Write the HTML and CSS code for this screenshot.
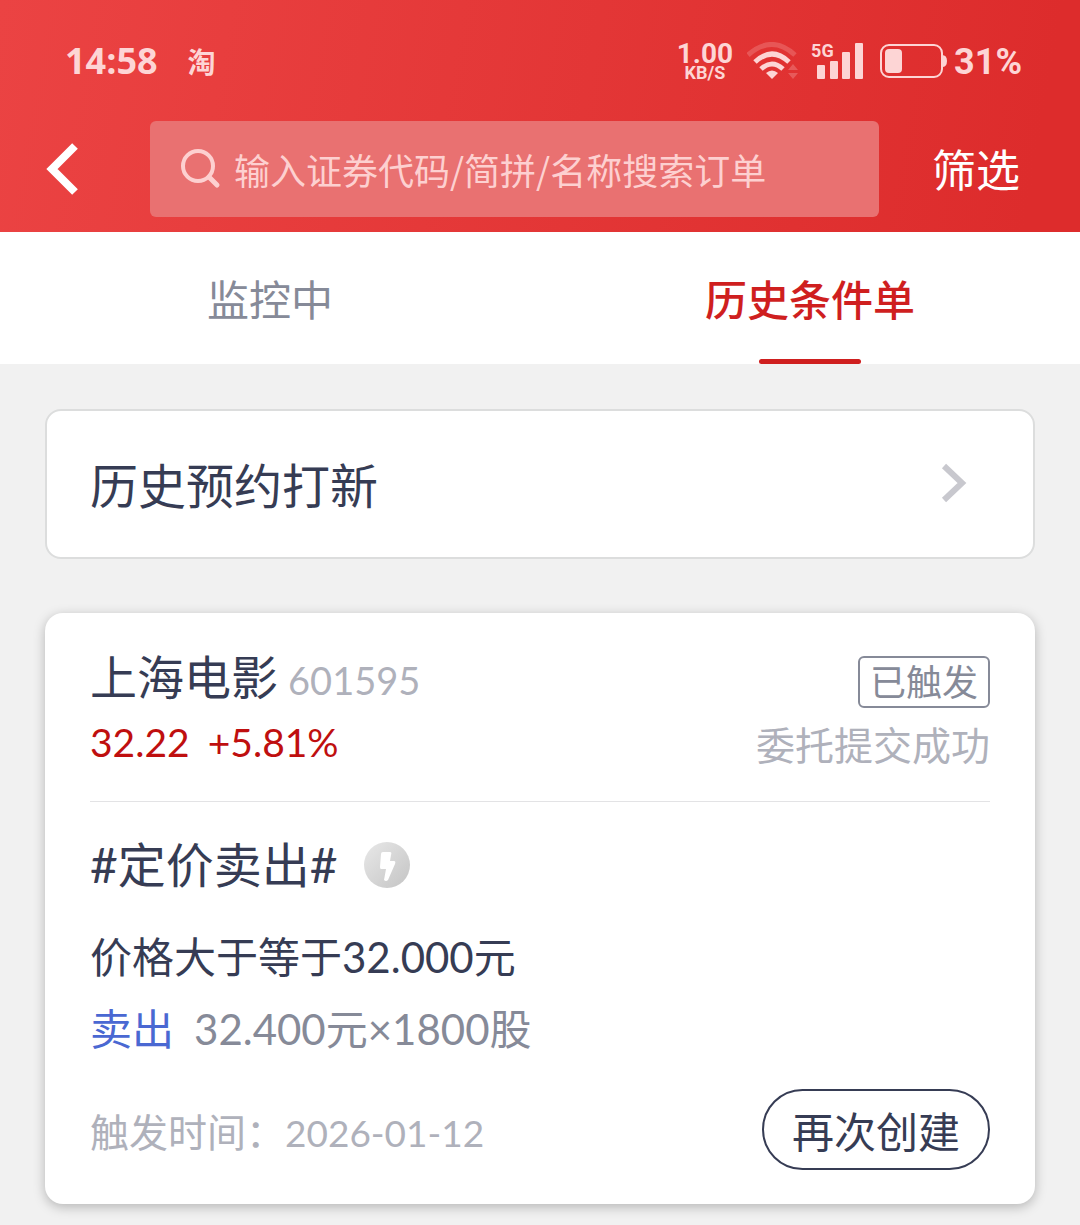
FILE: index.html
```html
<!DOCTYPE html>
<html lang="zh-CN">
<head>
    <meta charset="UTF-8">
    <meta name="viewport" content="width=device-width, initial-scale=1.0">
    <title>历史条件单</title>
    <link rel="stylesheet" href="styles.css">
</head>
<body>
    <header class="header">
        <div class="status-bar">
            <span class="time">14:58</span>
            <span class="app-mark">淘</span>
            <div class="speed">
                <span class="speed-value">1.00</span>
                <span class="speed-unit">KB/S</span>
            </div>
            <svg class="wifi" width="52" height="38" viewBox="0 0 52 38" fill="none" stroke="#fdd5d5" stroke-width="5">
                <path d="M1 13 Q25 -8 48 13" opacity="0.22" stroke-width="5"/>
                <path d="M8 20 Q25 4 42 20"/>
                <path d="M14 27 Q25 17 36 27"/>
                <path d="M19 31 Q25 26 31 31 L25 37 Z" fill="#fdd5d5" stroke="none"/>
                <path d="M41 28 L46 22 L51 28 Z M41 31 L46 37 L51 31 Z" fill="#fdd5d5" stroke="none" opacity="0.25"/>
            </svg>
            <div class="signal">
                <span class="network">5G</span>
                <svg width="46" height="38" viewBox="0 0 46 38" fill="#fdd5d5">
                    <rect x="0" y="23" width="8" height="14" rx="1"/>
                    <rect x="13" y="19" width="8" height="18" rx="1"/>
                    <rect x="25" y="10" width="8" height="27" rx="1"/>
                    <rect x="38" y="1" width="8" height="36" rx="1"/>
                </svg>
            </div>
            <svg class="battery" width="68" height="36" viewBox="0 0 68 36">
                <rect x="1" y="2" width="61" height="32" rx="8" fill="none" stroke="#fdd5d5" stroke-width="2"/>
                <rect x="5" y="6" width="17" height="24" rx="4" fill="#fdd5d5"/>
                <path d="M62 12 Q67 12 67 18 Q67 24 62 24 Z" fill="#fdd5d5"/>
            </svg>
            <span class="percent">31%</span>
        </div>
        <div class="search-row">
            <button class="back" aria-label="返回">
                <svg width="34" height="54" viewBox="0 0 34 54" fill="none" stroke="#fff" stroke-width="8">
                    <path d="M31 4 L8 27 L31 50"/>
                </svg>
            </button>
            <label class="search">
                <svg width="42" height="42" viewBox="0 0 42 42" fill="none" stroke="#fdd0d0" stroke-width="4">
                    <circle cx="18" cy="18" r="15"/>
                    <path d="M29 29 L37 37" stroke-width="5" stroke-linecap="round"/>
                </svg>
                <input type="text" placeholder="输入证券代码/简拼/名称搜索订单" aria-label="搜索订单">
            </label>
            <button class="filter">筛选</button>
        </div>
    </header>

    <nav class="tabs">
        <a class="tab" href="#monitoring">监控中</a>
        <a class="tab active" href="#history">历史条件单</a>
    </nav>

    <main class="content">
        <a class="entry" href="#ipo">
            <span>历史预约打新</span>
            <svg width="26" height="42" viewBox="0 0 26 42" fill="none" stroke="#c8c8ce" stroke-width="6">
                <path d="M3 4 L21 21 L3 38"/>
            </svg>
        </a>

        <section class="order">
            <div class="order-head">
                <div>
                    <h2 class="stock">上海电影 <span class="code">601595</span></h2>
                    <p class="price"><span>32.22</span><span>+5.81%</span></p>
                </div>
                <div class="state">
                    <span class="badge">已触发</span>
                    <span class="result">委托提交成功</span>
                </div>
            </div>
            <h3 class="strategy">
                #定价卖出#
                <svg width="46" height="46" viewBox="0 0 46 46">
                    <defs>
                        <linearGradient id="disc" x1="0" y1="0" x2="1" y2="1">
                            <stop offset="0" stop-color="#e8e8e8"/>
                            <stop offset="1" stop-color="#c4c4c4"/>
                        </linearGradient>
                    </defs>
                    <circle cx="23" cy="23" r="23" fill="url(#disc)"/>
                    <path d="M19 10 H26 Q28 10 27 13 L26 19 H30 Q32 19 31 22 L24 38 Q22 40 20 38 L22 27 H17 Q16 27 16 25 L17 12 Q17 10 19 10 Z" fill="#fff"/>
                </svg>
            </h3>
            <p class="condition">价格大于等于32.000元</p>
            <p class="trade"><span class="side">卖出</span><span>32.400元×1800股</span></p>
            <div class="order-foot">
                <span>触发时间：<time>2026-01-12</time></span>
                <button class="again">再次创建</button>
            </div>
        </section>
    </main>
</body>
</html>
```
FILE: styles.css
```css
* {
    box-sizing: border-box;
}
body {
    font-family: "Noto Sans CJK SC", sans-serif;
    margin: 0;
    background: #f1f1f1;
    color: #363c54;
}
h2, h3, p {
    margin: 0;
    font-weight: normal;
}
a {
    color: inherit;
    text-decoration: none;
}
button {
    font-family: inherit;
    background: none;
    border: none;
    padding: 0;
    cursor: pointer;
}
svg {
    display: block;
    flex: none;
}
.header {
    background: linear-gradient(100deg, #eb4343, #dd2c2c 95%);
    color: #fdd5d5;
    padding-bottom: 15px;
}
.status-bar {
    display: flex;
    align-items: center;
    height: 121px;
    padding: 0 58px 0 65px;
    font-weight: bold;
    line-height: 40px;
}
.time {
    font-family: "Open Sans", sans-serif;
    font-size: 36px;
}
.app-mark {
    font-size: 28px;
    margin-left: 30px;
    margin-right: auto;
}
.speed {
    display: flex;
    flex-direction: column;
    align-items: center;
    padding-top: 4px;
    font-family: Roboto, sans-serif;
}
.speed-value {
    font-size: 28px;
    line-height: 20px;
}
.speed-unit {
    font-size: 18px;
    line-height: 18px;
}
.wifi {
    margin-left: 14px;
}
.signal {
    position: relative;
    margin-left: 18px;
}
.network {
    position: absolute;
    left: -6px;
    top: 0;
    font-family: Roboto, sans-serif;
    font-size: 18px;
    line-height: 18px;
}
.battery {
    margin-left: 17px;
}
.percent {
    margin-left: 6px;
    padding-top: 3px;
    font-family: Roboto, sans-serif;
    font-size: 36px;
}
.search-row {
    display: flex;
    height: 96px;
}
.back {
    display: flex;
    align-items: center;
    width: 150px;
    padding-left: 44px;
}
.search {
    flex: 1;
    display: flex;
    align-items: center;
    gap: 12px;
    padding: 0 30px;
    border-radius: 6px;
    background: #e97171;
}
.search input {
    flex: 1;
    min-width: 0;
    padding: 0;
    border: none;
    outline: none;
    background: none;
    color: #fff;
    font-family: inherit;
    font-size: 36px;
}
.search input::placeholder {
    color: #fdd0d0;
    opacity: 1;
}
.filter {
    width: 201px;
    padding-right: 7px;
    padding-bottom: 2px;
    color: #fff;
    font-size: 44px;
}
.tabs {
    display: flex;
    background: #fff;
}
.tab {
    flex: 1;
    position: relative;
    height: 132px;
    text-align: center;
    font-size: 42px;
    line-height: 132px;
    color: #868a98;
}
.tab.active {
    color: #cf1f1f;
    font-weight: 500;
}
.tab.active::after {
    content: "";
    position: absolute;
    left: 50%;
    bottom: 0;
    width: 102px;
    height: 5px;
    margin-left: -51px;
    border-radius: 3px;
    background: #cf1f1f;
}
.content {
    padding: 45px 45px 21px;
}
.entry {
    display: flex;
    align-items: center;
    justify-content: space-between;
    height: 150px;
    padding: 0 66px 2px 43px;
    border: 2px solid #dcdddd;
    border-radius: 16px;
    background: #fff;
    font-size: 48px;
}
.order {
    margin-top: 54px;
    padding: 32px 45px 34px;
    border-radius: 18px;
    background: #fff;
    box-shadow: 0 3px 12px rgba(0, 0, 0, 0.25);
    font-family: Lato, "Noto Sans CJK SC", sans-serif;
}
.order-head {
    display: flex;
    justify-content: space-between;
    padding-bottom: 28px;
    border-bottom: 1px solid #e3e3e5;
}
.stock {
    font-size: 47px;
    line-height: 64px;
}
.code {
    margin-left: -2px;
    font-size: 38px;
    color: #afb1bb;
}
.price {
    display: flex;
    gap: 18px;
    font-size: 39px;
    line-height: 60px;
    color: #bf0f0f;
}
.state {
    display: flex;
    flex-direction: column;
    align-items: flex-end;
    padding-top: 11px;
}
.badge {
    padding: 0 10px;
    border: 2px solid #868a98;
    border-radius: 6px;
    font-size: 36px;
    line-height: 48px;
    color: #868a98;
}
.result {
    margin-top: 8px;
    font-size: 39px;
    line-height: 58px;
    color: #afb1bb;
}
.order-head {
    padding-bottom: 27px;
}
.strategy {
    display: flex;
    align-items: center;
    gap: 26px;
    margin-top: 31px;
    font-size: 48px;
    line-height: 64px;
}
.condition,
.trade {
    font-size: 42px;
    line-height: 72px;
}
.condition {
    margin-top: 24px;
}
.trade {
    display: flex;
    gap: 20px;
    color: #868a98;
}
.side {
    color: #4a68d2;
}
.order-foot {
    display: flex;
    align-items: center;
    justify-content: space-between;
    margin-top: 24px;
    font-size: 39px;
    color: #afb1bb;
}
.order-foot time {
    font-size: 37px;
}
.again {
    width: 228px;
    height: 81px;
    border: 2px solid #363c54;
    border-radius: 41px;
    font-size: 42px;
    color: #363c54;
}
```
